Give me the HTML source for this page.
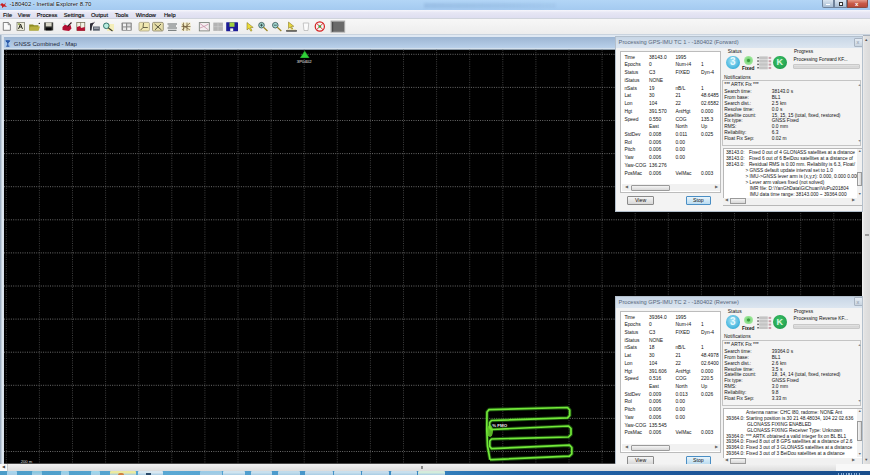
<!DOCTYPE html>
<html><head><meta charset="utf-8"><title>Inertial Explorer</title>
<style>
html,body{margin:0;padding:0;}
body{width:870px;height:475px;overflow:hidden;position:relative;background:#f0f0f0;font-family:"Liberation Sans", sans-serif;color:#000;}
.a{position:absolute;}
.t{position:absolute;white-space:nowrap;line-height:1;}
svg{display:block;}
</style></head><body>

<div class="a" style="left:0;top:0;width:870px;height:9.5px;background:linear-gradient(#b2d5f6,#a4caf0);"></div>
<div class="a" style="left:0;top:1.5px;width:7px;height:6px;"><svg width="7" height="6"><path d="M0,3 L2,1 L4,2.5 L6,0.5 L5,3 L7,5 L4,4.5 L2,6 L2,4 Z" fill="#c82020"/></svg></div>
<div class="t" style="left:9.4px;top:1.6px;font-size:5.95px;color:#0a0a0a;text-shadow:0 0 2px #e8f4ff,0 0 1px #e8f4ff;">-180402 - Inertial Explorer 8.70</div>
<div class="a" style="left:424px;top:3px;width:132px;height:5px;background:linear-gradient(90deg,rgba(80,120,170,0.16),rgba(80,120,170,0.12) 60%,rgba(80,120,170,0.06));filter:blur(1px);"></div>
<div class="a" style="left:822px;top:0;width:12px;height:8px;background:linear-gradient(#d9e4ef,#a9bed3);border:0.5px solid #6f829a;border-top:none;box-sizing:border-box;border-radius:0 0 0 2px;"></div>
<div class="a" style="left:825.6px;top:3.9px;width:4.6px;height:1.2px;background:#fff;"></div>
<div class="a" style="left:834px;top:0;width:13px;height:8px;background:linear-gradient(#d9e4ef,#a9bed3);border:0.5px solid #6f829a;border-top:none;box-sizing:border-box;"></div>
<div class="a" style="left:838.5px;top:2px;width:4px;height:3.5px;border:0.8px solid #333;box-sizing:border-box;background:#fff;"></div>
<div class="a" style="left:847px;top:0;width:21px;height:8px;background:linear-gradient(#e49c8c,#c85a48 50%,#b84a3a);border:0.5px solid #8a4a40;border-top:none;box-sizing:border-box;border-radius:0 0 2px 0;"></div>
<div class="t" style="left:855px;top:1.2px;font-size:6px;color:#fff;font-weight:bold;">x</div>
<div class="a" style="left:0;top:9.5px;width:870px;height:8.8px;background:linear-gradient(#f6f6fc 0,#e6e6f4 35%,#dedef0);"></div>
<div class="t" style="left:2.9px;top:12.6px;font-size:5.7px;color:#000;-webkit-text-stroke:0.12px #000;">File</div>
<div class="t" style="left:17.8px;top:12.6px;font-size:5.7px;color:#000;-webkit-text-stroke:0.12px #000;">View</div>
<div class="t" style="left:36.8px;top:12.6px;font-size:5.7px;color:#000;-webkit-text-stroke:0.12px #000;">Process</div>
<div class="t" style="left:63.8px;top:12.6px;font-size:5.7px;color:#000;-webkit-text-stroke:0.12px #000;">Settings</div>
<div class="t" style="left:90.9px;top:12.6px;font-size:5.7px;color:#000;-webkit-text-stroke:0.12px #000;">Output</div>
<div class="t" style="left:115px;top:12.6px;font-size:5.7px;color:#000;-webkit-text-stroke:0.12px #000;">Tools</div>
<div class="t" style="left:135.7px;top:12.6px;font-size:5.7px;color:#000;-webkit-text-stroke:0.12px #000;">Window</div>
<div class="t" style="left:163.9px;top:12.6px;font-size:5.7px;color:#000;-webkit-text-stroke:0.12px #000;">Help</div>
<div class="a" style="left:0;top:18.3px;width:870px;height:16.5px;background:linear-gradient(#f7f7f7,#ececec);border-top:0.6px solid #d0d4dc;box-sizing:border-box;"></div>
<div class="a" style="left:0;top:34.2px;width:870px;height:1.5px;background:#c9d3de;"></div>
<svg class="a" style="left:0;top:0" width="350" height="36" viewBox="0 0 350 36"><path d="M3.3,22.5 H8.2 L10.4,24.7 V30.3 H3.3 Z" fill="#fafafa" stroke="#555" stroke-width="0.7"/><path d="M8.2,22.5 V24.7 H10.4" fill="none" stroke="#555" stroke-width="0.6"/><rect x="17" y="22.6" width="7.6" height="7.7" fill="#efeedc" stroke="#6e6e60" stroke-width="0.7"/><path d="M18.5,29 L20.5,24 L22.5,29 M19.3,27 H21.7" fill="none" stroke="#2a2a20" stroke-width="1"/><rect x="18" y="23.4" width="2" height="1.4" fill="#8aa040"/><path d="M29.2,24.5 H33 L34,25.3 H38.5 V30.4 H29.2 Z" fill="#8c8a22"/><path d="M30.4,26.6 H40 L38.6,30.4 H29.2 Z" fill="#b8b040"/><circle cx="39.3" cy="23.4" r="0.7" fill="#222"/><rect x="44.2" y="22.4" width="9" height="8" fill="#3c3c38"/><rect x="45.8" y="22.6" width="5.8" height="3.8" fill="#d8d6c6"/><rect x="45.8" y="27.6" width="5.8" height="2.8" fill="#0a0a0a"/><path d="M62.5,27 L65,24.5 L68,26 L70.5,25 L71.5,28.5 L69,31 L65,30.5 L62.5,30 Z" fill="#b31033"/><path d="M67.5,26.5 L71.5,22.5" stroke="#3a1a20" stroke-width="1.1"/><rect x="63.6" y="23.4" width="1.8" height="1.3" fill="#8ad0c0"/><rect x="76.8" y="22.4" width="8" height="8" fill="#f2f2e4" stroke="#6c6248" stroke-width="0.7"/><path d="M80.6,22.4 V30.4" stroke="#6c6248" stroke-width="0.6"/><path d="M77,27 L80,26 L81,28 L84.8,27 L85,30.8 L77,30.8 Z" fill="#b51030"/><path d="M90,23.5 L93.5,22.5 L92,27 L91.5,30.5 L90,30.5 Z" fill="#303038"/><path d="M92,24.5 L94.5,22.3" stroke="#302838" stroke-width="1"/><rect x="93" y="26.5" width="6.8" height="4.2" fill="#5c6470"/><rect x="94" y="27.6" width="4.8" height="1" fill="#c0c4cc"/><rect x="107" y="24" width="7" height="7" fill="#f4eeb8"/><circle cx="106.3" cy="25.8" r="2.8" fill="#b8ece0" stroke="#22665e" stroke-width="0.9"/><path d="M108.4,28 L112.5,31" stroke="#3a3a2a" stroke-width="1.1"/><rect x="121.5" y="22.5" width="10.3" height="8.3" rx="0.8" fill="#8a8a8a"/><rect x="123" y="23.6" width="3" height="2.8" fill="#f2f2f2"/><rect x="127.2" y="23.6" width="3.4" height="2.8" fill="#dcdcdc"/><rect x="123" y="27.4" width="3" height="2.6" fill="#e6e6e6"/><rect x="127.2" y="27.4" width="3.4" height="2.6" fill="#f2f2f2"/><rect x="139" y="22.4" width="10.4" height="8.6" rx="1.2" fill="#f0e8b2" stroke="#a09a78" stroke-width="0.7"/><path d="M143.5,23 L143,27.5 L140.5,30.2 M143,27.5 H147.8" fill="none" stroke="#4a4630" stroke-width="0.8"/><rect x="152.5" y="22.4" width="10.8" height="8.6" rx="1.2" fill="#e6deaa" stroke="#8a8468" stroke-width="0.8"/><path d="M154.5,24 L161.5,30 M161,24 L155,29.8" stroke="#3a3826" stroke-width="0.8"/><rect x="167.3" y="22.8" width="10" height="8" fill="#f4f4f4"/><path d="M167.5,24 H177 M168.5,26 H176 M167.5,28 H177 M168,30.3 H176.5" stroke="#505858" stroke-width="0.9"/><rect x="181.5" y="22.6" width="9" height="8.2" fill="#f0e8c0"/><path d="M182,24.5 L190,30 M182,30 L190,23 M183.5,22.6 V30.8 M187,22.6 V30.8 M181.5,26.5 H190.5" stroke="#6e5a38" stroke-width="0.7"/><rect x="199.3" y="22.6" width="10" height="8.3" fill="#f4eef0" stroke="#707870" stroke-width="0.8"/><path d="M200,23.5 L208.5,30 M200,28 L205,26 L208.5,24" stroke="#c890a8" stroke-width="0.8" fill="none"/><rect x="213.3" y="22.6" width="9.6" height="8.3" fill="#b4b4b4"/><path d="M213.3,26.7 H222.9 M218,22.6 V30.9" stroke="#d0d0d0" stroke-width="0.6"/><rect x="226.2" y="22.2" width="11.8" height="9" rx="0.5" fill="#1c1c96"/><rect x="229.5" y="22.4" width="5" height="4.4" fill="#a0d040"/><rect x="230.2" y="28.4" width="3" height="2.6" fill="#f4f4f4"/><path d="M247,22.5 L247,30 L249,28.2 L250.8,31.2 L252,30.6 L250.4,27.6 L253.2,27.4 Z" fill="#ecdc3a" stroke="#7a6a10" stroke-width="0.5"/><circle cx="261.5" cy="25.2" r="2.8" fill="#a8dcd4" stroke="#2e4e50" stroke-width="0.8"/><path d="M260,25.2 H263 M261.5,23.7 V26.7" stroke="#203030" stroke-width="0.7"/><path d="M263.5,27.3 L267.5,31" stroke="#9a8420" stroke-width="1.2"/><circle cx="275.3" cy="25.2" r="2.8" fill="#a8dcd4" stroke="#2e4e50" stroke-width="0.8"/><path d="M273.8,25.2 H276.8" stroke="#203030" stroke-width="0.7"/><path d="M277.3,27.3 L281.3,31" stroke="#9a8420" stroke-width="1.2"/><path d="M288.5,22 L288.5,28.5 L290.2,27 L291.8,29.5 L292.8,29 L291.4,26.5 L293.8,26.3 Z" fill="#e8d840" stroke="#7a6a10" stroke-width="0.5"/><rect x="286.2" y="30.2" width="10.6" height="1.4" fill="#282828"/><rect x="287" y="29.4" width="9" height="0.8" fill="#e8e0a0"/><path d="M303.2,23 H308.8 L308,30.5 H304 Z" fill="#fbfbfb" stroke="#b0b0b0" stroke-width="0.7"/><circle cx="319.8" cy="26.5" r="4.6" fill="#f4f4f4" stroke="#d42020" stroke-width="1.2"/><path d="M316.6,23.3 L323,29.7 M323,23.3 L316.6,29.7" stroke="#d42020" stroke-width="0.9"/><circle cx="319.8" cy="26.5" r="1.3" fill="#30b040"/><rect x="330.8" y="20.8" width="14.2" height="11.8" fill="#9a9a9a" stroke="#c8c8c8" stroke-width="0.6"/><rect x="332" y="22" width="12" height="9.6" fill="#6a6a6a"/><rect x="332" y="22" width="1.2" height="9.6" fill="#4a4a4a"/></svg>
<div class="a" style="left:0;top:34.6px;width:870px;height:0.8px;background:#a8b0ba;"></div>
<div class="a" style="left:0;top:35.4px;width:863px;height:1.4px;background:#dfe8f2;"></div>
<div class="a" style="left:0;top:36.8px;width:863px;height:11.2px;background:linear-gradient(#9cb5d2,#b9d0ea);"></div>
<div class="a" style="left:0;top:48px;width:863px;height:1.6px;background:linear-gradient(#e4eef8,#9fb3c8);"></div>
<div class="a" style="left:0;top:35.4px;width:4.1px;height:430px;background:linear-gradient(90deg,#9fb0c2 0,#9fb0c2 1.2px,#e2eaf3 1.8px,#d6e0ea 4.1px);"></div>
<div class="a" style="left:5.2px;top:40.1px;width:5.6px;height:6.8px;"><svg width="5.6" height="6.8"><rect x="0" y="0" width="5.6" height="6.8" fill="#a8c8ec"/><path d="M0.8,0.8 L2.8,3 L4.8,0.8 Z M2.8,3 L2.8,6 M1.2,6.2 H4.4" stroke="#1f4fa0" stroke-width="1" fill="#2f60b0"/></svg></div>
<div class="t" style="left:13.8px;top:41.3px;font-size:6px;color:#1c2638;">GNSS Combined - Map</div>
<svg class="a" style="left:0;top:0" width="870" height="475" viewBox="0 0 870 475"><rect x="4.0" y="49.8" width="858.4" height="413.9" fill="#000"/><g stroke="#464646" stroke-width="0.9" stroke-dasharray="1 1.3"><line x1="6.30" y1="49.8" x2="6.30" y2="463.7"/><line x1="39.40" y1="49.8" x2="39.40" y2="463.7"/><line x1="72.50" y1="49.8" x2="72.50" y2="463.7"/><line x1="105.60" y1="49.8" x2="105.60" y2="463.7"/><line x1="138.70" y1="49.8" x2="138.70" y2="463.7"/><line x1="171.80" y1="49.8" x2="171.80" y2="463.7"/><line x1="204.90" y1="49.8" x2="204.90" y2="463.7"/><line x1="238.00" y1="49.8" x2="238.00" y2="463.7"/><line x1="271.10" y1="49.8" x2="271.10" y2="463.7"/><line x1="304.20" y1="49.8" x2="304.20" y2="463.7"/><line x1="337.30" y1="49.8" x2="337.30" y2="463.7"/><line x1="370.40" y1="49.8" x2="370.40" y2="463.7"/><line x1="403.50" y1="49.8" x2="403.50" y2="463.7"/><line x1="436.60" y1="49.8" x2="436.60" y2="463.7"/><line x1="469.70" y1="49.8" x2="469.70" y2="463.7"/><line x1="502.80" y1="49.8" x2="502.80" y2="463.7"/><line x1="535.90" y1="49.8" x2="535.90" y2="463.7"/><line x1="569.00" y1="49.8" x2="569.00" y2="463.7"/><line x1="602.10" y1="49.8" x2="602.10" y2="463.7"/><line x1="635.20" y1="49.8" x2="635.20" y2="463.7"/><line x1="668.30" y1="49.8" x2="668.30" y2="463.7"/><line x1="701.40" y1="49.8" x2="701.40" y2="463.7"/><line x1="734.50" y1="49.8" x2="734.50" y2="463.7"/><line x1="767.60" y1="49.8" x2="767.60" y2="463.7"/><line x1="800.70" y1="49.8" x2="800.70" y2="463.7"/><line x1="833.80" y1="49.8" x2="833.80" y2="463.7"/></g><g stroke="#767676" stroke-width="0.9" stroke-dasharray="1 1.3"><line x1="4.0" y1="54.30" x2="862.4" y2="54.30"/><line x1="4.0" y1="87.40" x2="862.4" y2="87.40"/><line x1="4.0" y1="120.50" x2="862.4" y2="120.50"/><line x1="4.0" y1="153.60" x2="862.4" y2="153.60"/><line x1="4.0" y1="186.70" x2="862.4" y2="186.70"/><line x1="4.0" y1="219.80" x2="862.4" y2="219.80"/><line x1="4.0" y1="252.90" x2="862.4" y2="252.90"/><line x1="4.0" y1="286.00" x2="862.4" y2="286.00"/><line x1="4.0" y1="319.10" x2="862.4" y2="319.10"/><line x1="4.0" y1="352.20" x2="862.4" y2="352.20"/><line x1="4.0" y1="385.30" x2="862.4" y2="385.30"/><line x1="4.0" y1="418.40" x2="862.4" y2="418.40"/><line x1="4.0" y1="451.50" x2="862.4" y2="451.50"/></g><path d="M490.0,459.6 L487.5,446 L486.8,430 L487.0,412 L489,409.6 L567.5,407.5 L569.7,410 L569.7,415.5 L567.5,417.8 L491.5,420.5 L489.6,422.5 L489.6,427.5 L491.5,429.5 L568.5,426 L571,428.5 L571,434.5 L568.5,437 L491.5,439 L489.8,441 L489.8,446.5 L491.5,448.6 L569.5,445.2 L571.8,447.5 L571.8,454 L569.5,456.2 L492.5,459.6 L490.0,459.6" fill="none" stroke="#2c8a14" stroke-width="3.6" stroke-linejoin="round" opacity="0.55"/><path d="M490.0,459.6 L487.5,446 L486.8,430 L487.0,412 L489,409.6 L567.5,407.5 L569.7,410 L569.7,415.5 L567.5,417.8 L491.5,420.5 L489.6,422.5 L489.6,427.5 L491.5,429.5 L568.5,426 L571,428.5 L571,434.5 L568.5,437 L491.5,439 L489.8,441 L489.8,446.5 L491.5,448.6 L569.5,445.2 L571.8,447.5 L571.8,454 L569.5,456.2 L492.5,459.6 L490.0,459.6" fill="none" stroke="#74e83a" stroke-width="1.7" stroke-linejoin="round"/><ellipse cx="490" cy="431" rx="3" ry="6" fill="#6fe030" opacity="0.8"/><path d="M304.7,50.6 L309.6,58 L299.9,58 Z" fill="#1f9a26"/><path d="M304.7,51.8 L308.6,57.4 L300.9,57.4 Z" fill="#30d038"/></svg>
<div class="t" style="left:296.8px;top:60px;font-size:4.3px;color:#eee;">3P0402</div>
<div class="t" style="left:492.2px;top:424.2px;font-size:4.4px;color:#f4f4f4;font-weight:bold;">% FMO</div>
<div class="t" style="left:20.7px;top:459.8px;font-size:4.2px;color:#ddd;">200 m</div>
<div class="a" style="left:862.4px;top:35.5px;width:7.6px;height:428.5px;background:linear-gradient(90deg,#f4f4f4,#e2e2e2 30%,#dadada);box-sizing:border-box;"></div>
<div class="a" style="left:864.5px;top:233.5px;width:4px;height:4px;background:repeating-linear-gradient(#9a9a9a 0 0.6px,transparent 0.6px 1.3px);"></div>
<div class="t" style="left:864.3px;top:37.5px;font-size:4px;color:#555;">&#9650;</div>
<div class="t" style="left:864.3px;top:457.5px;font-size:4px;color:#555;">&#9660;</div>
<div class="a" style="left:0;top:463.7px;width:870px;height:7.2px;background:linear-gradient(#f2f2f2,#dcdcdc);"></div>
<div class="a" style="left:0;top:463.7px;width:8px;height:7.2px;background:#fafafa;border-right:0.5px solid #c8c8c8;box-sizing:border-box;"></div>
<div class="t" style="left:2.2px;top:465.3px;font-size:4px;color:#444;">&#9664;</div>
<div class="t" style="left:856.5px;top:465.3px;font-size:4px;color:#444;">&#9654;</div>
<div class="a" style="left:836px;top:463.7px;width:34px;height:7.2px;background:#f8f8f8;"></div>
<div class="a" style="left:420.5px;top:465.5px;width:3.5px;height:3.5px;background:repeating-linear-gradient(90deg,#8a8a8a 0 0.6px,transparent 0.6px 1.3px);"></div>
<div class="a" style="left:0;top:470.9px;width:870px;height:4.1px;background:linear-gradient(90deg,#4b9cc8 0%,#5aa8d4 20%,#3c8cc4 45%,#2469ad 60%,#1d5598 80%,#1a4e8c 100%);"></div>
<div class="a" style="left:7px;top:471.2px;width:10px;height:3.8px;background:linear-gradient(#a8d4ec,#a8d4ec 40%,#a8cce4);border-radius:1px 1px 0 0;box-sizing:border-box;"></div>
<div class="a" style="left:32px;top:471.2px;width:10px;height:3.8px;background:linear-gradient(#8cc8e0,#8cc8e0 40%,#a8cce4);border-radius:1px 1px 0 0;box-sizing:border-box;"></div>
<div class="a" style="left:61px;top:471.2px;width:8px;height:3.8px;background:linear-gradient(#9ad0e8,#9ad0e8 40%,#a8cce4);border-radius:1px 1px 0 0;box-sizing:border-box;"></div>
<div class="a" style="left:91px;top:471.2px;width:9px;height:3.8px;background:linear-gradient(#a0d6ec,#a0d6ec 40%,#a8cce4);border-radius:1px 1px 0 0;box-sizing:border-box;"></div>
<div class="a" style="left:109.8px;top:471.2px;width:26.39999999999999px;height:3.8px;background:linear-gradient(#eceaa0,#eceaa0 40%,#a8cce4);border-radius:1px 1px 0 0;box-sizing:border-box;"></div>
<div class="a" style="left:138px;top:471.2px;width:24.599999999999994px;height:3.8px;background:linear-gradient(#d8e8f2,#d8e8f2 40%,#a8cce4);border-radius:1px 1px 0 0;box-sizing:border-box;"></div>
<div class="a" style="left:200px;top:471.2px;width:22px;height:3.8px;background:linear-gradient(#9ccbe6,#9ccbe6 40%,#a8cce4);border-radius:1px 1px 0 0;box-sizing:border-box;"></div>
<div class="a" style="left:222.5px;top:471.2px;width:22.30000000000001px;height:3.8px;background:linear-gradient(#cfe4f0,#cfe4f0 40%,#a8cce4);border-radius:1px 1px 0 0;box-sizing:border-box;"></div>
<div class="a" style="left:250.6px;top:471.2px;width:21.799999999999983px;height:3.8px;background:linear-gradient(#c8e0ee,#c8e0ee 40%,#a8cce4);border-radius:1px 1px 0 0;box-sizing:border-box;"></div>
<div class="a" style="left:278px;top:471.2px;width:22px;height:3.8px;background:linear-gradient(#c0dcec,#c0dcec 40%,#a8cce4);border-radius:1px 1px 0 0;box-sizing:border-box;"></div>
<div class="a" style="left:305px;top:471.2px;width:28px;height:3.8px;background:linear-gradient(#c4dcec,#c4dcec 40%,#a8cce4);border-radius:1px 1px 0 0;box-sizing:border-box;"></div>
<div class="a" style="left:334px;top:471.2px;width:27px;height:3.8px;background:linear-gradient(#c8e0ee,#c8e0ee 40%,#a8cce4);border-radius:1px 1px 0 0;box-sizing:border-box;"></div>
<div class="a" style="left:362px;top:471.2px;width:27px;height:3.8px;background:linear-gradient(#c4dcec,#c4dcec 40%,#a8cce4);border-radius:1px 1px 0 0;box-sizing:border-box;"></div>
<div class="a" style="left:391px;top:471.2px;width:26px;height:3.8px;background:linear-gradient(#c8e0ee,#c8e0ee 40%,#a8cce4);border-radius:1px 1px 0 0;box-sizing:border-box;"></div>
<div class="a" style="left:418.4px;top:471.2px;width:26.600000000000023px;height:3.8px;background:linear-gradient(#d4ecdc,#d4ecdc 40%,#a8cce4);border-radius:1px 1px 0 0;box-sizing:border-box;"></div>
<div class="a" style="left:118px;top:472.5px;width:6px;height:2.5px;background:#d08040;border-radius:2px 2px 0 0;"></div>
<div class="a" style="left:146px;top:472.5px;width:5px;height:2.5px;background:#2a4a6a;"></div>
<div class="a" style="left:838px;top:472.5px;width:22px;height:2.5px;background:repeating-linear-gradient(90deg,#8ab0d8 0 1.2px,transparent 1.2px 2.6px);"></div>
<div class="a" style="left:614.8px;top:35.8px;width:248px;height:175.9px;background:#f3f3f3;border:0.6px solid #b4c0cc;box-sizing:border-box;overflow:hidden;"><div class="a" style="left:0;top:0;width:248px;height:11.4px;background:linear-gradient(#c8d6e6,#dce6f0);"></div><div class="t" style="left:2.8px;top:3.3px;font-size:5.7px;color:#56667a;">Processing GPS-IMU TC 1 - -180402 (Forward)</div><div class="a" style="left:238.2px;top:0.8px;width:8.6px;height:9px;border:0.5px solid #a8b4c2;background:linear-gradient(#e4ecf4,#c8d4e0);box-sizing:border-box;border-radius:1px;"></div><div class="t" style="left:240.8px;top:3.2px;font-size:5.5px;color:#8a96a4;">x</div><div class="a" style="left:4.6px;top:14.5px;width:100.4px;height:141.5px;background:#fff;border:0.6px solid #bcbcbc;box-sizing:border-box;"></div><div class="t" style="left:8.6px;top:19.0px;font-size:4.9px;color:#111;">Time</div><div class="t" style="left:33.2px;top:19.0px;font-size:4.9px;color:#111;">38143.0</div><div class="t" style="left:59.6px;top:19.0px;font-size:4.9px;color:#111;">1995</div><div class="t" style="left:8.6px;top:26.7px;font-size:4.9px;color:#111;">Epochs</div><div class="t" style="left:33.2px;top:26.7px;font-size:4.9px;color:#111;">0</div><div class="t" style="left:59.6px;top:26.7px;font-size:4.9px;color:#111;">Num-i4</div><div class="t" style="left:85.2px;top:26.7px;font-size:4.9px;color:#111;">1</div><div class="t" style="left:8.6px;top:34.4px;font-size:4.9px;color:#111;">Status</div><div class="t" style="left:33.2px;top:34.4px;font-size:4.9px;color:#111;">C3</div><div class="t" style="left:59.6px;top:34.4px;font-size:4.9px;color:#111;">FIXED</div><div class="t" style="left:85.2px;top:34.4px;font-size:4.9px;color:#111;">Dyn-4</div><div class="t" style="left:8.6px;top:42.2px;font-size:4.9px;color:#111;">iStatus</div><div class="t" style="left:33.2px;top:42.2px;font-size:4.9px;color:#111;">NONE</div><div class="t" style="left:8.6px;top:49.9px;font-size:4.9px;color:#111;">nSats</div><div class="t" style="left:33.2px;top:49.9px;font-size:4.9px;color:#111;">19</div><div class="t" style="left:59.6px;top:49.9px;font-size:4.9px;color:#111;">nB/L</div><div class="t" style="left:85.2px;top:49.9px;font-size:4.9px;color:#111;">1</div><div class="t" style="left:8.6px;top:57.6px;font-size:4.9px;color:#111;">Lat</div><div class="t" style="left:33.2px;top:57.6px;font-size:4.9px;color:#111;">30</div><div class="t" style="left:59.6px;top:57.6px;font-size:4.9px;color:#111;">21</div><div class="t" style="left:85.2px;top:57.6px;font-size:4.9px;color:#111;">48.6485</div><div class="t" style="left:8.6px;top:65.3px;font-size:4.9px;color:#111;">Lon</div><div class="t" style="left:33.2px;top:65.3px;font-size:4.9px;color:#111;">104</div><div class="t" style="left:59.6px;top:65.3px;font-size:4.9px;color:#111;">22</div><div class="t" style="left:85.2px;top:65.3px;font-size:4.9px;color:#111;">02.6582</div><div class="t" style="left:8.6px;top:73.0px;font-size:4.9px;color:#111;">Hgt</div><div class="t" style="left:33.2px;top:73.0px;font-size:4.9px;color:#111;">391.570</div><div class="t" style="left:59.6px;top:73.0px;font-size:4.9px;color:#111;">AntHgt</div><div class="t" style="left:85.2px;top:73.0px;font-size:4.9px;color:#111;">0.000</div><div class="t" style="left:8.6px;top:80.8px;font-size:4.9px;color:#111;">Speed</div><div class="t" style="left:33.2px;top:80.8px;font-size:4.9px;color:#111;">0.550</div><div class="t" style="left:59.6px;top:80.8px;font-size:4.9px;color:#111;">COG</div><div class="t" style="left:85.2px;top:80.8px;font-size:4.9px;color:#111;">135.3</div><div class="t" style="left:33.2px;top:88.5px;font-size:4.9px;color:#111;">East</div><div class="t" style="left:59.6px;top:88.5px;font-size:4.9px;color:#111;">North</div><div class="t" style="left:85.2px;top:88.5px;font-size:4.9px;color:#111;">Up</div><div class="t" style="left:8.6px;top:96.2px;font-size:4.9px;color:#111;">StdDev</div><div class="t" style="left:33.2px;top:96.2px;font-size:4.9px;color:#111;">0.008</div><div class="t" style="left:59.6px;top:96.2px;font-size:4.9px;color:#111;">0.011</div><div class="t" style="left:85.2px;top:96.2px;font-size:4.9px;color:#111;">0.025</div><div class="t" style="left:8.6px;top:103.9px;font-size:4.9px;color:#111;">Rol</div><div class="t" style="left:33.2px;top:103.9px;font-size:4.9px;color:#111;">0.006</div><div class="t" style="left:59.6px;top:103.9px;font-size:4.9px;color:#111;">0.00</div><div class="t" style="left:8.6px;top:111.6px;font-size:4.9px;color:#111;">Pitch</div><div class="t" style="left:33.2px;top:111.6px;font-size:4.9px;color:#111;">0.006</div><div class="t" style="left:59.6px;top:111.6px;font-size:4.9px;color:#111;">0.00</div><div class="t" style="left:8.6px;top:119.4px;font-size:4.9px;color:#111;">Yaw</div><div class="t" style="left:33.2px;top:119.4px;font-size:4.9px;color:#111;">0.006</div><div class="t" style="left:59.6px;top:119.4px;font-size:4.9px;color:#111;">0.00</div><div class="t" style="left:8.6px;top:127.1px;font-size:4.9px;color:#111;">Yaw-COG</div><div class="t" style="left:33.2px;top:127.1px;font-size:4.9px;color:#111;">136.276</div><div class="t" style="left:8.6px;top:134.8px;font-size:4.9px;color:#111;">PosMac</div><div class="t" style="left:33.2px;top:134.8px;font-size:4.9px;color:#111;">0.006</div><div class="t" style="left:59.6px;top:134.8px;font-size:4.9px;color:#111;">VelMac</div><div class="t" style="left:85.2px;top:134.8px;font-size:4.9px;color:#111;">0.003</div><div class="a" style="left:6.2px;top:147.7px;width:98px;height:7px;background:#f1f1f1;"></div><div class="t" style="left:9px;top:149.3px;font-size:3.6px;color:#666;">&#9664;</div><div class="t" style="left:99px;top:149.3px;font-size:3.6px;color:#666;">&#9654;</div><div class="a" style="left:15px;top:148.2px;width:39px;height:6px;background:linear-gradient(#f4f4f4,#d8d8d8);border:0.5px solid #9a9a9a;box-sizing:border-box;border-radius:1px;"></div><div class="a" style="left:11.2px;top:159.4px;width:27.2px;height:9.2px;background:linear-gradient(#f6f6f6,#e6e6e6 50%,#d8d8d8);border:0.6px solid #8a8a8a;box-sizing:border-box;border-radius:1px;"></div><div class="t" style="left:19.2px;top:161.4px;font-size:5.2px;color:#111;">View</div><div class="a" style="left:70.2px;top:159.4px;width:25.2px;height:9.2px;background:linear-gradient(#eaf5fc,#d0e8f6 50%,#bcdcf0);border:0.7px solid #4a8ec4;box-sizing:border-box;border-radius:1px;"></div><div class="t" style="left:77.2px;top:161.4px;font-size:5.2px;color:#111;">Stop</div><div class="t" style="left:112px;top:13.6px;font-size:4.9px;color:#111;">Status</div><div class="a" style="left:110.6px;top:18.8px;width:13.7px;height:13.7px;border-radius:50%;background:radial-gradient(circle at 45% 40%,#a8e4f6,#48b6de 65%,#2a9cc8 85%,#8ad8f0);"></div><div class="t" style="left:114.2px;top:20.6px;font-size:10px;font-weight:bold;color:#e8fbff;">3</div><div class="a" style="left:128px;top:19px;width:8.8px;height:8.8px;border-radius:50%;background:radial-gradient(circle,#3a9a40 18%,#7cd87c 32%,#a4e8a0 70%,#c8f2c4);"></div><div class="t" style="left:126.2px;top:30px;font-size:4.8px;font-weight:bold;color:#111;">Fixed</div><div class="a" style="left:140.8px;top:19.2px;width:15px;height:13.7px;"><svg width="15" height="13.7"><rect x="2.2" y="0.3" width="8.6" height="13.2" fill="#dcdcdc"/><rect x="2.4" y="0.6" width="8.2" height="2.4" fill="#c4c4c4"/><rect x="0.3" y="1.0" width="1.5" height="1.4" fill="#505050"/><rect x="11.6" y="0.9" width="2.6" height="2" fill="#c8a0a8"/><rect x="2.4" y="3.95" width="8.2" height="2.4" fill="#c4c4c4"/><rect x="0.3" y="4.35" width="1.5" height="1.4" fill="#505050"/><rect x="11.6" y="4.25" width="2.6" height="2" fill="#c8a0a8"/><rect x="2.4" y="7.3" width="8.2" height="2.4" fill="#c4c4c4"/><rect x="0.3" y="7.7" width="1.5" height="1.4" fill="#505050"/><rect x="11.6" y="7.6000000000000005" width="2.6" height="2" fill="#c8a0a8"/><rect x="2.4" y="10.65" width="8.2" height="2.4" fill="#c4c4c4"/><rect x="0.3" y="11.05" width="1.5" height="1.4" fill="#505050"/><rect x="11.6" y="10.950000000000001" width="2.6" height="2" fill="#c8a0a8"/></svg></div><div class="a" style="left:157px;top:18.9px;width:13.8px;height:13.8px;border-radius:50%;background:radial-gradient(circle at 45% 40%,#40c468,#22a050 70%,#1a9048 85%,#8fe0a0);"></div><div class="t" style="left:160.6px;top:21.2px;font-size:9px;font-weight:bold;color:#d8f8e0;">K</div><div class="t" style="left:178.1px;top:13.5px;font-size:4.8px;color:#111;">Progress</div><div class="t" style="left:177.8px;top:20.8px;font-size:4.85px;color:#111;">Processing Forward KF...</div><div class="a" style="left:177.3px;top:27.4px;width:67px;height:5px;background:linear-gradient(#e6e6e6,#d2d2d2 60%,#dedede);border:0.5px solid #c8c8c8;box-sizing:border-box;border-radius:1px;"></div><div class="t" style="left:108.2px;top:38.8px;font-size:4.9px;color:#111;">Notifications</div><div class="a" style="left:106px;top:43.4px;width:139px;height:66.3px;background:#f4f4f4;border:0.5px solid #c4c4c4;box-sizing:border-box;"></div><div class="t" style="left:108.5px;top:46.6px;font-size:4.85px;color:#111;">*** ARTK Fix ***</div><div class="t" style="left:108.5px;top:53.4px;font-size:4.85px;color:#111;">Search time:</div><div class="t" style="left:156px;top:53.4px;font-size:4.85px;color:#111;">38143.0 s</div><div class="t" style="left:108.5px;top:59.2px;font-size:4.85px;color:#111;">From base:</div><div class="t" style="left:156px;top:59.2px;font-size:4.85px;color:#111;">BL1</div><div class="t" style="left:108.5px;top:65.1px;font-size:4.85px;color:#111;">Search dist.:</div><div class="t" style="left:156px;top:65.1px;font-size:4.85px;color:#111;">2.5 km</div><div class="t" style="left:108.5px;top:71.0px;font-size:4.85px;color:#111;">Resolve time:</div><div class="t" style="left:156px;top:71.0px;font-size:4.85px;color:#111;">0.0 s</div><div class="t" style="left:108.5px;top:76.8px;font-size:4.85px;color:#111;">Satellite count:</div><div class="t" style="left:156px;top:76.8px;font-size:4.85px;color:#111;">15, 15, 15 (total, fixed, restored)</div><div class="t" style="left:108.5px;top:82.7px;font-size:4.85px;color:#111;">Fix type:</div><div class="t" style="left:156px;top:82.7px;font-size:4.85px;color:#111;">GNSS Fixed</div><div class="t" style="left:108.5px;top:88.6px;font-size:4.85px;color:#111;">RMS:</div><div class="t" style="left:156px;top:88.6px;font-size:4.85px;color:#111;">0.0 mm</div><div class="t" style="left:108.5px;top:94.5px;font-size:4.85px;color:#111;">Reliability:</div><div class="t" style="left:156px;top:94.5px;font-size:4.85px;color:#111;">6.3</div><div class="t" style="left:108.5px;top:100.3px;font-size:4.85px;color:#111;">Float Fix Sep:</div><div class="t" style="left:156px;top:100.3px;font-size:4.85px;color:#111;">0.02 m</div><div class="t" style="left:242px;top:47px;font-size:3.5px;color:#888;">&#9650;</div><div class="t" style="left:242px;top:103px;font-size:3.5px;color:#888;">&#9660;</div><div class="a" style="left:107px;top:111.3px;width:140px;height:58.2px;background:#fff;border:0.5px solid #b8b8b8;box-sizing:border-box;overflow:hidden;"><div class="t" style="left:2.1px;top:2.2px;font-size:4.8px;color:#111;">38143.0:</div><div class="t" style="left:25.1px;top:2.2px;font-size:4.8px;color:#111;">Fixed 0 out of 4 GLONASS satellites at a distance</div><div class="t" style="left:2.1px;top:8.1px;font-size:4.8px;color:#111;">38143.0:</div><div class="t" style="left:25.1px;top:8.1px;font-size:4.8px;color:#111;">Fixed 6 out of 6 BeiDou satellites at a distance of</div><div class="t" style="left:2.1px;top:14.0px;font-size:4.8px;color:#111;">38143.0:</div><div class="t" style="left:25.1px;top:14.0px;font-size:4.8px;color:#111;">Residual RMS is 0.00 mm. Reliability is 6.3, Float/</div><div class="t" style="left:21.7px;top:19.9px;font-size:4.8px;color:#111;">&gt; GNSS default update interval set to 1.0</div><div class="t" style="left:21.7px;top:25.8px;font-size:4.8px;color:#111;">&gt; IMU-&gt;GNSS lever arm is (x,y,z): 0.000, 0.000 0.000</div><div class="t" style="left:21.7px;top:31.7px;font-size:4.8px;color:#111;">&gt; Lever arm values fixed (not solved)</div><div class="t" style="left:25.9px;top:37.6px;font-size:4.8px;color:#111;">   IMR file: D:\YanGhData\GiChuan\VuPu201804</div><div class="t" style="left:25.9px;top:43.5px;font-size:4.8px;color:#111;">   IMU data time range: 38143.000 ~ 39364.000</div></div><div class="a" style="left:241.4px;top:112.3px;width:5.2px;height:48.5px;background:#f1f1f1;"></div><div class="a" style="left:241.6px;top:135.2px;width:4.8px;height:14.5px;background:linear-gradient(90deg,#f4f4f4,#d8d8d8);border:0.5px solid #9a9a9a;box-sizing:border-box;"></div><div class="a" style="left:107.5px;top:161px;width:139px;height:7px;background:#f1f1f1;"></div><div class="t" style="left:109.5px;top:162.6px;font-size:3.6px;color:#666;">&#9664;</div><div class="t" style="left:236.5px;top:162.6px;font-size:3.6px;color:#666;">&#9654;</div><div class="t" style="left:242.2px;top:113.5px;font-size:3.6px;color:#666;">&#9650;</div><div class="t" style="left:242.2px;top:156.5px;font-size:3.6px;color:#666;">&#9660;</div><div class="a" style="left:114.1px;top:161.5px;width:16.5px;height:6px;background:linear-gradient(#f4f4f4,#d8d8d8);border:0.5px solid #9a9a9a;box-sizing:border-box;"></div></div>
<div class="a" style="left:0;top:0;width:870px;height:463.7px;overflow:hidden;"><div class="a" style="left:614.8px;top:295.5px;width:248px;height:175.9px;background:#f3f3f3;border:0.6px solid #b4c0cc;box-sizing:border-box;overflow:hidden;"><div class="a" style="left:0;top:0;width:248px;height:11.4px;background:linear-gradient(#c8d6e6,#dce6f0);"></div><div class="t" style="left:2.8px;top:3.3px;font-size:5.7px;color:#56667a;">Processing GPS-IMU TC 2 - -180402 (Reverse)</div><div class="a" style="left:238.2px;top:0.8px;width:8.6px;height:9px;border:0.5px solid #a8b4c2;background:linear-gradient(#e4ecf4,#c8d4e0);box-sizing:border-box;border-radius:1px;"></div><div class="t" style="left:240.8px;top:3.2px;font-size:5.5px;color:#8a96a4;">x</div><div class="a" style="left:4.6px;top:14.5px;width:100.4px;height:141.5px;background:#fff;border:0.6px solid #bcbcbc;box-sizing:border-box;"></div><div class="t" style="left:8.6px;top:19.0px;font-size:4.9px;color:#111;">Time</div><div class="t" style="left:33.2px;top:19.0px;font-size:4.9px;color:#111;">39364.0</div><div class="t" style="left:59.6px;top:19.0px;font-size:4.9px;color:#111;">1995</div><div class="t" style="left:8.6px;top:26.7px;font-size:4.9px;color:#111;">Epochs</div><div class="t" style="left:33.2px;top:26.7px;font-size:4.9px;color:#111;">0</div><div class="t" style="left:59.6px;top:26.7px;font-size:4.9px;color:#111;">Num-i4</div><div class="t" style="left:85.2px;top:26.7px;font-size:4.9px;color:#111;">1</div><div class="t" style="left:8.6px;top:34.4px;font-size:4.9px;color:#111;">Status</div><div class="t" style="left:33.2px;top:34.4px;font-size:4.9px;color:#111;">C3</div><div class="t" style="left:59.6px;top:34.4px;font-size:4.9px;color:#111;">FIXED</div><div class="t" style="left:85.2px;top:34.4px;font-size:4.9px;color:#111;">Dyn-4</div><div class="t" style="left:8.6px;top:42.2px;font-size:4.9px;color:#111;">iStatus</div><div class="t" style="left:33.2px;top:42.2px;font-size:4.9px;color:#111;">NONE</div><div class="t" style="left:8.6px;top:49.9px;font-size:4.9px;color:#111;">nSats</div><div class="t" style="left:33.2px;top:49.9px;font-size:4.9px;color:#111;">18</div><div class="t" style="left:59.6px;top:49.9px;font-size:4.9px;color:#111;">nB/L</div><div class="t" style="left:85.2px;top:49.9px;font-size:4.9px;color:#111;">1</div><div class="t" style="left:8.6px;top:57.6px;font-size:4.9px;color:#111;">Lat</div><div class="t" style="left:33.2px;top:57.6px;font-size:4.9px;color:#111;">30</div><div class="t" style="left:59.6px;top:57.6px;font-size:4.9px;color:#111;">21</div><div class="t" style="left:85.2px;top:57.6px;font-size:4.9px;color:#111;">48.4978</div><div class="t" style="left:8.6px;top:65.3px;font-size:4.9px;color:#111;">Lon</div><div class="t" style="left:33.2px;top:65.3px;font-size:4.9px;color:#111;">104</div><div class="t" style="left:59.6px;top:65.3px;font-size:4.9px;color:#111;">22</div><div class="t" style="left:85.2px;top:65.3px;font-size:4.9px;color:#111;">02.6400</div><div class="t" style="left:8.6px;top:73.0px;font-size:4.9px;color:#111;">Hgt</div><div class="t" style="left:33.2px;top:73.0px;font-size:4.9px;color:#111;">391.606</div><div class="t" style="left:59.6px;top:73.0px;font-size:4.9px;color:#111;">AntHgt</div><div class="t" style="left:85.2px;top:73.0px;font-size:4.9px;color:#111;">0.000</div><div class="t" style="left:8.6px;top:80.8px;font-size:4.9px;color:#111;">Speed</div><div class="t" style="left:33.2px;top:80.8px;font-size:4.9px;color:#111;">0.516</div><div class="t" style="left:59.6px;top:80.8px;font-size:4.9px;color:#111;">COG</div><div class="t" style="left:85.2px;top:80.8px;font-size:4.9px;color:#111;">220.5</div><div class="t" style="left:33.2px;top:88.5px;font-size:4.9px;color:#111;">East</div><div class="t" style="left:59.6px;top:88.5px;font-size:4.9px;color:#111;">North</div><div class="t" style="left:85.2px;top:88.5px;font-size:4.9px;color:#111;">Up</div><div class="t" style="left:8.6px;top:96.2px;font-size:4.9px;color:#111;">StdDev</div><div class="t" style="left:33.2px;top:96.2px;font-size:4.9px;color:#111;">0.009</div><div class="t" style="left:59.6px;top:96.2px;font-size:4.9px;color:#111;">0.013</div><div class="t" style="left:85.2px;top:96.2px;font-size:4.9px;color:#111;">0.026</div><div class="t" style="left:8.6px;top:103.9px;font-size:4.9px;color:#111;">Rol</div><div class="t" style="left:33.2px;top:103.9px;font-size:4.9px;color:#111;">0.006</div><div class="t" style="left:59.6px;top:103.9px;font-size:4.9px;color:#111;">0.00</div><div class="t" style="left:8.6px;top:111.6px;font-size:4.9px;color:#111;">Pitch</div><div class="t" style="left:33.2px;top:111.6px;font-size:4.9px;color:#111;">0.006</div><div class="t" style="left:59.6px;top:111.6px;font-size:4.9px;color:#111;">0.00</div><div class="t" style="left:8.6px;top:119.4px;font-size:4.9px;color:#111;">Yaw</div><div class="t" style="left:33.2px;top:119.4px;font-size:4.9px;color:#111;">0.006</div><div class="t" style="left:59.6px;top:119.4px;font-size:4.9px;color:#111;">0.00</div><div class="t" style="left:8.6px;top:127.1px;font-size:4.9px;color:#111;">Yaw-COG</div><div class="t" style="left:33.2px;top:127.1px;font-size:4.9px;color:#111;">135.545</div><div class="t" style="left:8.6px;top:134.8px;font-size:4.9px;color:#111;">PosMac</div><div class="t" style="left:33.2px;top:134.8px;font-size:4.9px;color:#111;">0.006</div><div class="t" style="left:59.6px;top:134.8px;font-size:4.9px;color:#111;">VelMac</div><div class="t" style="left:85.2px;top:134.8px;font-size:4.9px;color:#111;">0.003</div><div class="a" style="left:6.2px;top:147.7px;width:98px;height:7px;background:#f1f1f1;"></div><div class="t" style="left:9px;top:149.3px;font-size:3.6px;color:#666;">&#9664;</div><div class="t" style="left:99px;top:149.3px;font-size:3.6px;color:#666;">&#9654;</div><div class="a" style="left:15px;top:148.2px;width:39px;height:6px;background:linear-gradient(#f4f4f4,#d8d8d8);border:0.5px solid #9a9a9a;box-sizing:border-box;border-radius:1px;"></div><div class="a" style="left:11.2px;top:159.4px;width:27.2px;height:9.2px;background:linear-gradient(#f6f6f6,#e6e6e6 50%,#d8d8d8);border:0.6px solid #8a8a8a;box-sizing:border-box;border-radius:1px;"></div><div class="t" style="left:19.2px;top:161.4px;font-size:5.2px;color:#111;">View</div><div class="a" style="left:70.2px;top:159.4px;width:25.2px;height:9.2px;background:linear-gradient(#eaf5fc,#d0e8f6 50%,#bcdcf0);border:0.7px solid #4a8ec4;box-sizing:border-box;border-radius:1px;"></div><div class="t" style="left:77.2px;top:161.4px;font-size:5.2px;color:#111;">Stop</div><div class="t" style="left:112px;top:13.6px;font-size:4.9px;color:#111;">Status</div><div class="a" style="left:110.6px;top:18.8px;width:13.7px;height:13.7px;border-radius:50%;background:radial-gradient(circle at 45% 40%,#a8e4f6,#48b6de 65%,#2a9cc8 85%,#8ad8f0);"></div><div class="t" style="left:114.2px;top:20.6px;font-size:10px;font-weight:bold;color:#e8fbff;">3</div><div class="a" style="left:128px;top:19px;width:8.8px;height:8.8px;border-radius:50%;background:radial-gradient(circle,#3a9a40 18%,#7cd87c 32%,#a4e8a0 70%,#c8f2c4);"></div><div class="t" style="left:126.2px;top:30px;font-size:4.8px;font-weight:bold;color:#111;">Fixed</div><div class="a" style="left:140.8px;top:19.2px;width:15px;height:13.7px;"><svg width="15" height="13.7"><rect x="2.2" y="0.3" width="8.6" height="13.2" fill="#dcdcdc"/><rect x="2.4" y="0.6" width="8.2" height="2.4" fill="#c4c4c4"/><rect x="0.3" y="1.0" width="1.5" height="1.4" fill="#505050"/><rect x="11.6" y="0.9" width="2.6" height="2" fill="#c8a0a8"/><rect x="2.4" y="3.95" width="8.2" height="2.4" fill="#c4c4c4"/><rect x="0.3" y="4.35" width="1.5" height="1.4" fill="#505050"/><rect x="11.6" y="4.25" width="2.6" height="2" fill="#c8a0a8"/><rect x="2.4" y="7.3" width="8.2" height="2.4" fill="#c4c4c4"/><rect x="0.3" y="7.7" width="1.5" height="1.4" fill="#505050"/><rect x="11.6" y="7.6000000000000005" width="2.6" height="2" fill="#c8a0a8"/><rect x="2.4" y="10.65" width="8.2" height="2.4" fill="#c4c4c4"/><rect x="0.3" y="11.05" width="1.5" height="1.4" fill="#505050"/><rect x="11.6" y="10.950000000000001" width="2.6" height="2" fill="#c8a0a8"/></svg></div><div class="a" style="left:157px;top:18.9px;width:13.8px;height:13.8px;border-radius:50%;background:radial-gradient(circle at 45% 40%,#40c468,#22a050 70%,#1a9048 85%,#8fe0a0);"></div><div class="t" style="left:160.6px;top:21.2px;font-size:9px;font-weight:bold;color:#d8f8e0;">K</div><div class="t" style="left:178.1px;top:13.5px;font-size:4.8px;color:#111;">Progress</div><div class="t" style="left:177.8px;top:20.8px;font-size:4.85px;color:#111;">Processing Reverse KF...</div><div class="a" style="left:177.3px;top:27.4px;width:67px;height:5px;background:linear-gradient(#e6e6e6,#d2d2d2 60%,#dedede);border:0.5px solid #c8c8c8;box-sizing:border-box;border-radius:1px;"></div><div class="t" style="left:108.2px;top:38.8px;font-size:4.9px;color:#111;">Notifications</div><div class="a" style="left:106px;top:43.4px;width:139px;height:66.3px;background:#f4f4f4;border:0.5px solid #c4c4c4;box-sizing:border-box;"></div><div class="t" style="left:108.5px;top:46.6px;font-size:4.85px;color:#111;">*** ARTK Fix ***</div><div class="t" style="left:108.5px;top:53.4px;font-size:4.85px;color:#111;">Search time:</div><div class="t" style="left:156px;top:53.4px;font-size:4.85px;color:#111;">39364.0 s</div><div class="t" style="left:108.5px;top:59.2px;font-size:4.85px;color:#111;">From base:</div><div class="t" style="left:156px;top:59.2px;font-size:4.85px;color:#111;">BL1</div><div class="t" style="left:108.5px;top:65.1px;font-size:4.85px;color:#111;">Search dist.:</div><div class="t" style="left:156px;top:65.1px;font-size:4.85px;color:#111;">2.6 km</div><div class="t" style="left:108.5px;top:71.0px;font-size:4.85px;color:#111;">Resolve time:</div><div class="t" style="left:156px;top:71.0px;font-size:4.85px;color:#111;">3.5 s</div><div class="t" style="left:108.5px;top:76.8px;font-size:4.85px;color:#111;">Satellite count:</div><div class="t" style="left:156px;top:76.8px;font-size:4.85px;color:#111;">18, 14, 14 (total, fixed, restored)</div><div class="t" style="left:108.5px;top:82.7px;font-size:4.85px;color:#111;">Fix type:</div><div class="t" style="left:156px;top:82.7px;font-size:4.85px;color:#111;">GNSS Fixed</div><div class="t" style="left:108.5px;top:88.6px;font-size:4.85px;color:#111;">RMS:</div><div class="t" style="left:156px;top:88.6px;font-size:4.85px;color:#111;">3.0 mm</div><div class="t" style="left:108.5px;top:94.5px;font-size:4.85px;color:#111;">Reliability:</div><div class="t" style="left:156px;top:94.5px;font-size:4.85px;color:#111;">9.8</div><div class="t" style="left:108.5px;top:100.3px;font-size:4.85px;color:#111;">Float Fix Sep:</div><div class="t" style="left:156px;top:100.3px;font-size:4.85px;color:#111;">3.33 m</div><div class="t" style="left:242px;top:47px;font-size:3.5px;color:#888;">&#9650;</div><div class="t" style="left:242px;top:103px;font-size:3.5px;color:#888;">&#9660;</div><div class="a" style="left:107px;top:111.3px;width:140px;height:58.2px;background:#fff;border:0.5px solid #b8b8b8;box-sizing:border-box;overflow:hidden;"><div class="t" style="left:22.3px;top:2.2px;font-size:4.8px;color:#111;">Antenna name: CHC I80, radome: NONE        Ant</div><div class="t" style="left:2.1px;top:8.1px;font-size:4.8px;color:#111;">39364.0:</div><div class="t" style="left:22.3px;top:8.1px;font-size:4.8px;color:#111;">Starting position is 30 21 48.48034, 104 22 02.636</div><div class="t" style="left:23.3px;top:14.0px;font-size:4.8px;color:#111;">GLONASS FIXING ENABLED</div><div class="t" style="left:23.3px;top:19.9px;font-size:4.8px;color:#111;">GLONASS FIXING Receiver Type: Unknown</div><div class="t" style="left:2.1px;top:25.8px;font-size:4.8px;color:#111;">39364.0:</div><div class="t" style="left:22.3px;top:25.8px;font-size:4.8px;color:#111;">*** ARTK obtained a valid integer fix on BL BL1</div><div class="t" style="left:2.1px;top:31.7px;font-size:4.8px;color:#111;">39364.0:</div><div class="t" style="left:22.3px;top:31.7px;font-size:4.8px;color:#111;">Fixed 8 out of 8 GPS satellites at a distance of 2.6</div><div class="t" style="left:2.1px;top:37.6px;font-size:4.8px;color:#111;">39364.0:</div><div class="t" style="left:22.3px;top:37.6px;font-size:4.8px;color:#111;">Fixed 3 out of 3 GLONASS satellites at a distance</div><div class="t" style="left:2.1px;top:43.5px;font-size:4.8px;color:#111;">39364.0:</div><div class="t" style="left:22.3px;top:43.5px;font-size:4.8px;color:#111;">Fixed 3 out of 3 BeiDou satellites at a distance</div></div><div class="a" style="left:241.4px;top:112.3px;width:5.2px;height:48.5px;background:#f1f1f1;"></div><div class="a" style="left:241.6px;top:124.5px;width:4.8px;height:20px;background:linear-gradient(90deg,#f4f4f4,#d8d8d8);border:0.5px solid #9a9a9a;box-sizing:border-box;"></div><div class="a" style="left:107.5px;top:161px;width:139px;height:7px;background:#f1f1f1;"></div><div class="t" style="left:109.5px;top:162.6px;font-size:3.6px;color:#666;">&#9664;</div><div class="t" style="left:236.5px;top:162.6px;font-size:3.6px;color:#666;">&#9654;</div><div class="t" style="left:242.2px;top:113.5px;font-size:3.6px;color:#666;">&#9650;</div><div class="t" style="left:242.2px;top:156.5px;font-size:3.6px;color:#666;">&#9660;</div><div class="a" style="left:114.1px;top:161.5px;width:16.5px;height:6px;background:linear-gradient(#f4f4f4,#d8d8d8);border:0.5px solid #9a9a9a;box-sizing:border-box;"></div></div></div>
</body></html>
